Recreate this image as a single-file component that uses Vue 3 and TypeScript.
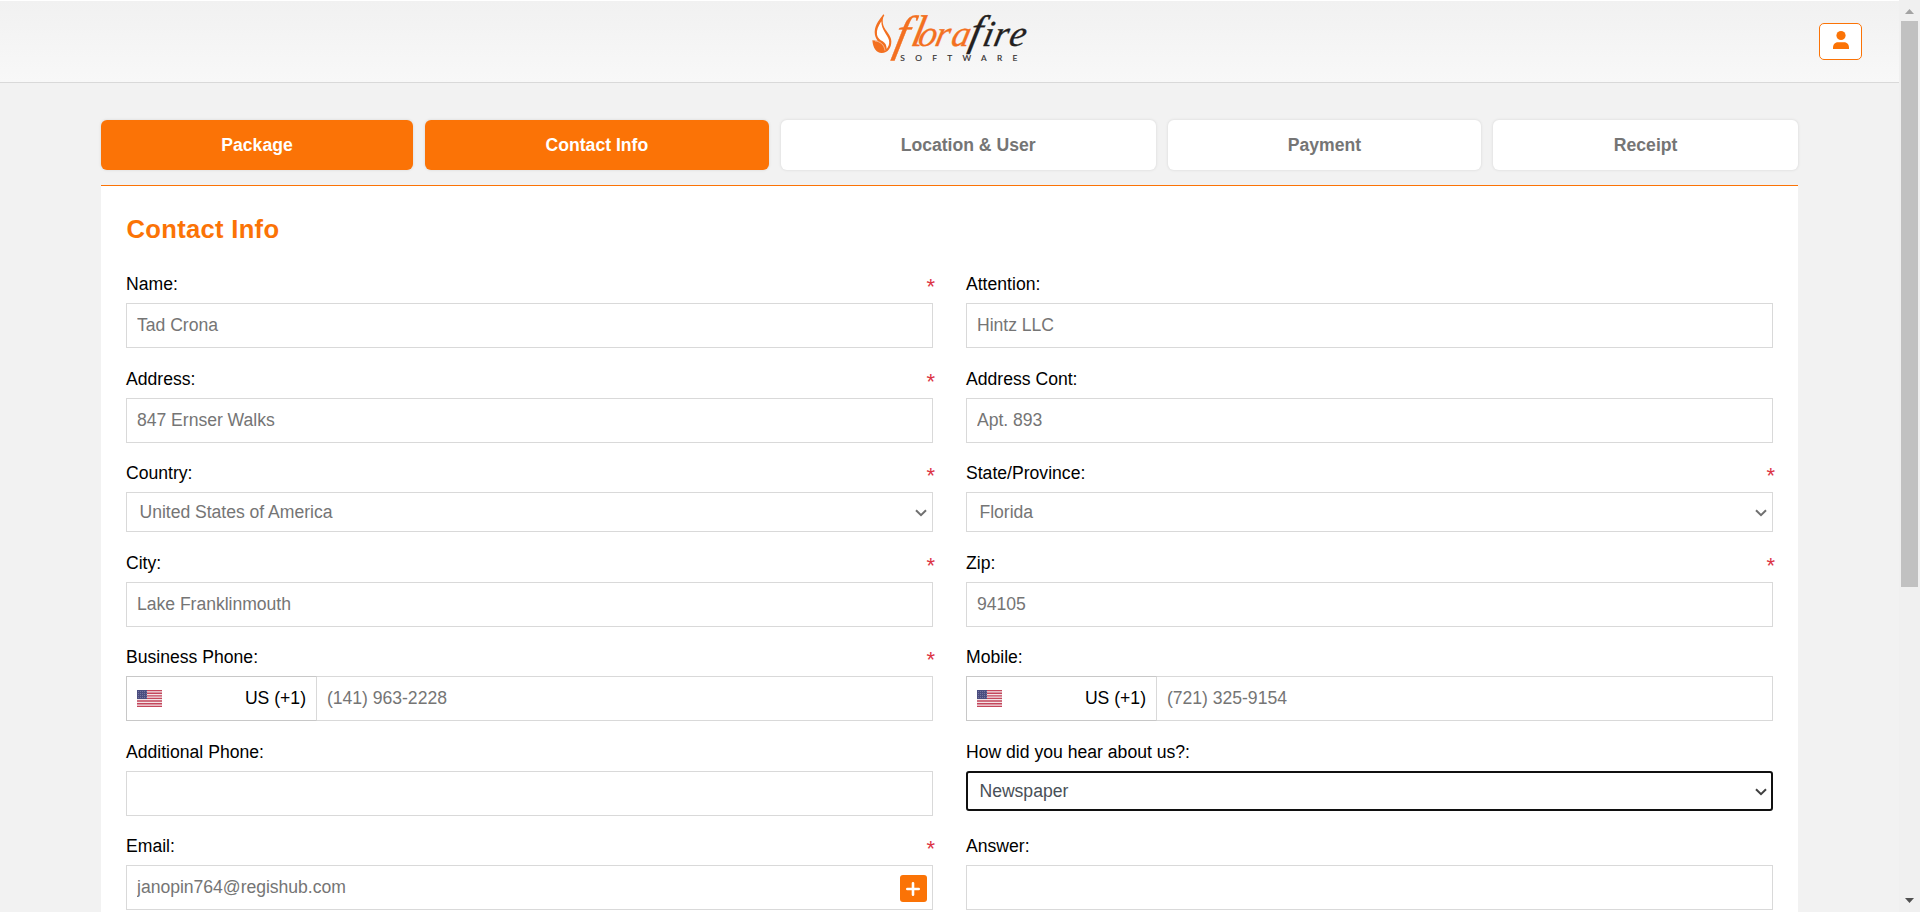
<script setup lang="ts">
import { ref } from 'vue'

type Kind = 'text' | 'select' | 'phone' | 'email'

interface Field {
  id: string
  label: string
  value: string
  kind: Kind
  required?: boolean
  focused?: boolean
}

interface Step {
  name: string
  done: boolean
}

const steps: Step[] = [
  { name: 'Package', done: true },
  { name: 'Contact Info', done: true },
  { name: 'Location & User', done: false },
  { name: 'Payment', done: false },
  { name: 'Receipt', done: false },
]

const fields = ref<Field[]>([
  { id: 'name', label: 'Name:', value: 'Tad Crona', kind: 'text', required: true },
  { id: 'attention', label: 'Attention:', value: 'Hintz LLC', kind: 'text' },
  { id: 'address', label: 'Address:', value: '847 Ernser Walks', kind: 'text', required: true },
  { id: 'address2', label: 'Address Cont:', value: 'Apt. 893', kind: 'text' },
  { id: 'country', label: 'Country:', value: 'United States of America', kind: 'select', required: true },
  { id: 'state', label: 'State/Province:', value: 'Florida', kind: 'select', required: true },
  { id: 'city', label: 'City:', value: 'Lake Franklinmouth', kind: 'text', required: true },
  { id: 'zip', label: 'Zip:', value: '94105', kind: 'text', required: true },
  { id: 'phone', label: 'Business Phone:', value: '(141) 963-2228', kind: 'phone', required: true },
  { id: 'mobile', label: 'Mobile:', value: '(721) 325-9154', kind: 'phone' },
  { id: 'phone2', label: 'Additional Phone:', value: '', kind: 'text' },
  { id: 'source', label: 'How did you hear about us?:', value: 'Newspaper', kind: 'select', focused: true },
  { id: 'email', label: 'Email:', value: 'janopin764@regishub.com', kind: 'email', required: true },
  { id: 'answer', label: 'Answer:', value: '', kind: 'text' },
])
</script>

<template>
  <div class="window">
    <div class="page">
      <header class="topbar">
        <span class="side"></span>
        <svg class="logo" viewBox="60 30 480 165" role="img" aria-label="Florafire Software">
          <path
            d="M103 43C94 56 78 72 77 96C77 108 81 116 86 122L70 121C72 145 82 159 98 159C117 159 127 144 127 124C127 106 108 92 103 76C100 66 100 54 106 46Z"
            fill="#f37021"
          />
          <path
            d="M97 64C88 78 82 90 84 104C86 114 93 119 101 124C109 129 113 136 113 147C119 140 122 131 120 121C116 104 97 92 97 64Z"
            fill="#fff"
          />
          <path d="M78 123C93 124 106 134 108 152" fill="none" stroke="#fff" stroke-width="1.5" />
          <g class="word" transform="translate(30.6 0) skewX(-12.4)">
            <text fill="#f37021" stroke="#f37021" y="139" font-size="110">
              <tspan x="132" y="150" font-size="148">f</tspan><tspan x="182" y="139" font-size="133">l</tspan><tspan x="203 254 303" y="139">ora</tspan>
            </text>
            <text fill="#231f20" stroke="#231f20" y="139" font-size="110">
              <tspan x="355" y="134" font-size="128">f</tspan><tspan x="397 430 476" y="139">ire</tspan>
            </text>
          </g>
          <text class="sub" x="154" y="182" textLength="351">SOFTWARE</text>
        </svg>
        <span class="side end">
          <button class="user" aria-label="Account">
            <svg width="18" height="20" viewBox="0 0 18 20">
              <circle cx="9" cy="5.5" r="4.6" />
              <path d="M1 19V17.6C1 14 3.6 12.2 6 12.2H12C14.4 12.2 17 14 17 17.6V19Z" />
            </svg>
          </button>
        </span>
      </header>

      <main class="content">
        <nav class="steps">
          <div v-for="s in steps" :key="s.name" class="step" :class="{ done: s.done }">{{ s.name }}</div>
        </nav>

        <section class="panel">
          <h1>Contact Info</h1>
          <form class="form" @submit.prevent>
            <div v-for="f in fields" :key="f.id" class="field">
              <div class="caption">
                <label :for="f.id">{{ f.label }}</label>
                <span v-if="f.required" class="star">*</span>
              </div>

              <div v-if="f.kind === 'select'" class="select" :class="{ focused: f.focused }">
                <select :id="f.id" v-model="f.value">
                  <option>{{ f.value }}</option>
                </select>
                <svg class="chevron" width="12" height="8" viewBox="0 0 12 8">
                  <path d="M1 1.2L6 6.2L11 1.2" />
                </svg>
              </div>

              <div v-else-if="f.kind === 'phone'" class="phone">
                <div class="prefix">
                  <svg width="25" height="17" viewBox="0 0 25 17">
                    <rect width="25" height="17" fill="#f3e3e6" />
                    <path
                      d="M0 .5H25M0 3.2H25M0 5.8H25M0 8.4H25M0 11H25M0 13.7H25M0 16.4H25"
                      stroke="#c4475c"
                      stroke-width="1.35"
                    />
                    <rect width="10" height="9" fill="#4b4d80" />
                    <path
                      d="M1 1.5H10M1 3.5H10M1 5.5H10M1 7.5H10"
                      stroke="#8687ab"
                      stroke-width=".8"
                      stroke-dasharray=".9 1.1"
                    />
                  </svg>
                  <span>US (+1)</span>
                </div>
                <input :id="f.id" v-model="f.value" type="text" />
              </div>

              <div v-else class="box">
                <input :id="f.id" v-model="f.value" type="text" />
                <button v-if="f.kind === 'email'" type="button" class="add" aria-label="Add email">
                  <svg width="14" height="14" viewBox="0 0 14 14"><path d="M7 1.3V12.7M1.3 7H12.7" /></svg>
                </button>
              </div>
            </div>
          </form>
        </section>
      </main>
    </div>

    <aside class="scroll">
      <svg width="9" height="5" viewBox="0 0 9 5"><path d="M0 5L4.5 0L9 5Z" fill="#a3a3a3" /></svg>
      <div class="thumb"></div>
      <svg class="down" width="9" height="5" viewBox="0 0 9 5"><path d="M0 0L4.5 5L9 0Z" fill="#505050" /></svg>
    </aside>
  </div>
</template>

<style>
body {
  margin: 0;
  overflow: hidden;
}
</style>

<style scoped>
* {
  box-sizing: border-box;
}
.window {
  display: flex;
  width: 1920px;
  height: 912px;
  overflow: hidden;
  background: #f2f2f2;
  font-family: 'Liberation Sans', Arial, sans-serif;
  font-size: 17.6px;
  color: #000;
}
.page {
  width: 1899px;
}
.topbar {
  display: flex;
  justify-content: space-between;
  height: 83px;
  border-top: 1px solid #fff;
  border-bottom: 1px solid #d9d9d9;
  background: linear-gradient(#f1f1f1, #f8f8f8);
}
.side {
  width: 870px;
}
.end {
  display: flex;
  justify-content: flex-end;
  padding: 21.5px 37px 0 0;
}
.logo {
  width: 160px;
  height: 55px;
  margin-top: 9px;
  overflow: visible;
}
.word {
  font-family: 'Liberation Serif', 'Times New Roman', serif;
  font-style: italic;
  stroke-width: 1px;
}
.sub {
  font-family: Lato, sans-serif;
  font-size: 25px;
  fill: #333031;
  stroke: #333031;
  stroke-width: 0.5px;
}
.user {
  display: flex;
  align-items: center;
  justify-content: center;
  width: 43px;
  height: 37px;
  padding: 0 0 3px;
  border: 1px solid #fb7306;
  border-radius: 5px;
  background: #fff;
}
.user svg {
  fill: #fb7306;
}
.content {
  padding: 37px 101px 0;
}
.steps {
  display: grid;
  grid-template-columns: 312px 343.25px 374.75px 313.25px 304.75px;
  column-gap: 12.25px;
}
.step {
  height: 50px;
  border-radius: 6px;
  background: #fff;
  box-shadow: 0 0 2px 1px #e4e4e4;
  color: #757575;
  font-weight: 700;
  line-height: 50px;
  text-align: center;
}
.step.done {
  background: #fb7306;
  color: #fff;
}
.panel {
  height: 740px;
  margin-top: 15px;
  padding: 28px 25px 0;
  border-top: 1px solid #fb7306;
  background: #fff;
}
h1 {
  margin: 0;
  padding-left: 0.5px;
  font-size: 25.6px;
  line-height: 30px;
  letter-spacing: 0.3px;
  color: #fb7306;
}
.form {
  display: grid;
  grid-template-columns: 807px 807px;
  grid-template-rows: 95px 94px 90px 94px 95px 94px 94px;
  column-gap: 33px;
  margin-top: 30px;
}
.caption {
  display: flex;
  justify-content: space-between;
  height: 29px;
  line-height: 20px;
}
.star {
  margin-right: -2px;
  color: #dc3545;
  font-size: 22px;
  line-height: 26px;
}
.box,
.phone {
  display: flex;
  align-items: center;
  height: 45px;
  border: 1px solid #d9d9d9;
}
input,
select {
  flex: 1;
  min-width: 0;
  height: 100%;
  border: 0;
  outline: 0;
  background: transparent;
  font: inherit;
  letter-spacing: -0.03px;
  color: #757575;
}
input {
  padding: 0 10px 1px;
}
select {
  padding: 0 12.5px;
  appearance: none;
}
.select {
  display: flex;
  align-items: center;
  height: 40px;
  padding-right: 5px;
  border: 1px solid #d9d9d9;
}
.chevron {
  margin-top: 2px;
  fill: none;
  stroke: #707070;
  stroke-width: 2;
}
.focused {
  padding-right: 4px;
  border: 2px solid #101010;
  border-radius: 3px;
}
.focused select {
  padding-left: 11.5px;
  color: #495057;
}
.focused .chevron {
  stroke: #404040;
}
.prefix {
  display: flex;
  align-items: center;
  justify-content: space-between;
  width: 191px;
  height: 45px;
  margin-left: -1px;
  padding: 0 10px;
  border: 1px solid #c8c8c8;
  border-right-color: #d9d9d9;
}
.prefix span {
  padding-bottom: 1px;
}
.add {
  display: flex;
  align-items: center;
  justify-content: center;
  width: 27px;
  height: 27px;
  margin: 2px 5.5px 0 0;
  padding: 0;
  border: 0;
  border-radius: 3px;
  background: #fb7306;
}
.add path {
  stroke: #fff;
  stroke-width: 2.6;
  stroke-linecap: round;
}
.scroll {
  display: flex;
  flex-direction: column;
  width: 21px;
  padding: 9px 2px 9px 2px;
  background: #f0f0f0;
}
.scroll svg {
  align-self: center;
}
.thumb {
  height: 566px;
  margin-top: 7px;
  background: #c1c1c1;
}
.down {
  margin-top: auto;
}
</style>
